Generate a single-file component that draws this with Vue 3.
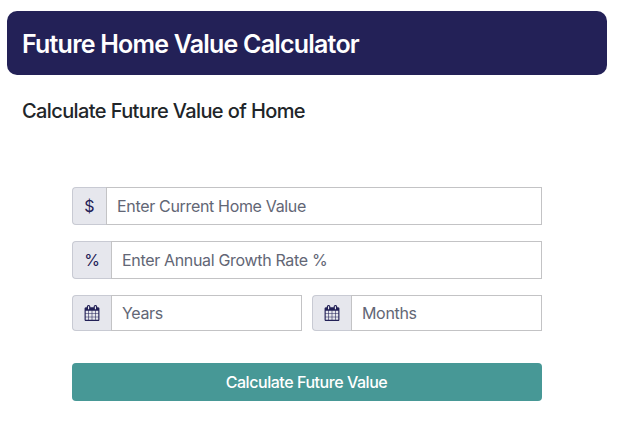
<template>
  <div class="calculator">
    <header class="calc-header">
      <h1>Future Home Value Calculator</h1>
    </header>
    <h2 class="calc-subtitle">Calculate Future Value of Home</h2>
    <form class="calc-form" @submit.prevent>
      <div class="input-group">
        <span class="addon dollar">$</span>
        <input v-model="homeValue" type="text" placeholder="Enter Current Home Value" />
      </div>
      <div class="input-group">
        <span class="addon">%</span>
        <input v-model="growthRate" type="text" placeholder="Enter Annual Growth Rate %" />
      </div>
      <div class="period-row">
        <div v-for="item in periods" :key="item.label" class="input-group short">
          <span class="addon">
            <svg class="calendar" viewBox="0 0 1792 1792" aria-hidden="true">
              <path d="M192 1664h288v-288h-288v288zm352 0h320v-288h-320v288zm-352-352h288v-320h-288v320zm352 0h320v-320h-320v320zm-352-384h288v-288h-288v288zm736 736h320v-288h-320v288zm-384-736h320v-288h-320v288zm768 736h288v-288h-288v288zm-384-352h320v-320h-320v320zm-352-864v-288q0-13-9.5-22.5t-22.5-9.5h-64q-13 0-22.5 9.5t-9.5 22.5v288q0 13 9.5 22.5t22.5 9.5h64q13 0 22.5-9.5t9.5-22.5zm736 864h288v-320h-288v320zm-384-384h320v-288h-320v288zm384 0h288v-288h-288v288zm32-480v-288q0-13-9.5-22.5t-22.5-9.5h-64q-13 0-22.5 9.5t-9.5 22.5v288q0 13 9.5 22.5t22.5 9.5h64q13 0 22.5-9.5t9.5-22.5zm384-64v1280q0 52-38 90t-90 38h-1408q-52 0-90-38t-38-90v-1280q0-52 38-90t90-38h128v-96q0-66 47-113t113-47h64q66 0 113 47t47 113v96h384v-96q0-66 47-113t113-47h64q66 0 113 47t47 113v96h128q52 0 90 38t38 90z" />
            </svg>
          </span>
          <input v-model="item.value" type="text" :placeholder="item.label" />
        </div>
      </div>
      <button class="calc-btn" type="submit">Calculate Future Value</button>
    </form>
  </div>
</template>

<script setup>
import { ref } from 'vue'

const homeValue = ref('')
const growthRate = ref('')
const periods = ref([
  { label: 'Years', value: '' },
  { label: 'Months', value: '' }
])
</script>

<style>
body {
  background: #fff;
}
</style>

<style scoped>
.calculator {
  padding: 11px 12px 0 7px;
  font-family: Inter, "Liberation Sans", sans-serif;
}

.calc-header {
  display: flex;
  align-items: center;
  height: 64px;
  padding: 2px 15px 0;
  box-sizing: border-box;
  border-radius: 10px;
  background: #232157;
}

.calc-header h1 {
  margin: 0;
  color: #fff;
  font-size: 25px;
  font-weight: 600;
  line-height: 30px;
  letter-spacing: -0.79px;
}

.calc-subtitle {
  margin: 24px 0 0 15px;
  color: #212529;
  font-size: 20px;
  font-weight: 500;
  line-height: 24px;
  letter-spacing: -0.61px;
}

.calc-form {
  display: flex;
  flex-direction: column;
  gap: 16px;
  width: 470px;
  margin: 64px 0 0 65px;
}

.input-group {
  display: flex;
  height: 38px;
}

.input-group.short {
  flex: 1;
  min-width: 0;
  height: 36px;
}

.addon {
  display: flex;
  align-items: center;
  justify-content: center;
  flex: none;
  box-sizing: border-box;
  width: 40px;
  padding-right: 1px;
  border: 1px solid #c8cad3;
  border-right: 0;
  border-radius: 4px 0 0 4px;
  background: #e6e7ed;
  color: #232157;
  font-size: 16px;
}

.addon.dollar {
  width: 35px;
}

.addon + input {
  margin-left: -1px;
}

.calendar {
  width: 16px;
  height: 16px;
  fill: #232157;
}

input {
  flex: 1;
  min-width: 0;
  box-sizing: border-box;
  padding: 0 10px;
  border: 1px solid #c3c3c5;
  border-radius: 0;
  outline: 0;
  background: #fff;
  color: #232157;
  font-family: inherit;
  font-size: 16px;
  letter-spacing: -0.33px;
}

input::placeholder {
  color: #626675;
  opacity: 1;
}

.period-row {
  display: flex;
  gap: 10px;
}

.calc-btn {
  height: 38px;
  margin-top: 16px;
  padding: 0 1px 0 0;
  border: 0;
  border-radius: 4px;
  background: #479896;
  color: #fff;
  font-family: inherit;
  font-size: 16px;
  font-weight: 500;
  letter-spacing: -0.45px;
  cursor: pointer;
}
</style>
